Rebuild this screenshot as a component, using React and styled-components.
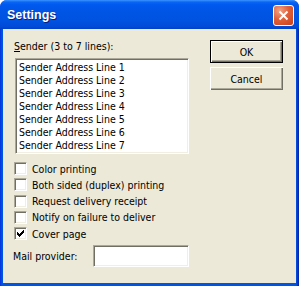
import React from "react";
import styled, { createGlobalStyle } from "styled-components";

const GlobalStyle = createGlobalStyle`
  html, body {
    margin: 0;
    padding: 0;
    background: #ffffff;
  }
  body {
    font-family: "DejaVu Sans Condensed", "DejaVu Sans", sans-serif;
    font-size: 10.5px;
    color: #000;
  }
`;

const Window = styled.div`
  width: 299px;
  height: 286px;
  display: flex;
  flex-direction: column;
  box-sizing: border-box;
  background: linear-gradient(to right, #0831d9 0, #0054e3 2px, #0054e3 296px, #001ea0 299px);
  border-radius: 7px 7px 0 0;
  overflow: hidden;
`;

const TitleBar = styled.div`
  height: 29px;
  flex: none;
  display: flex;
  align-items: center;
  justify-content: space-between;
  padding: 0 5px 0 7px;
  box-sizing: border-box;
  background: linear-gradient(
    to bottom,
    #3d95ff 0,
    #0a66f5 2px,
    #0058ee 5px,
    #0055e5 12px,
    #0053e1 20px,
    #004cd9 26px,
    #0041c8 29px
  );
`;

const Title = styled.span`
  font-family: "Liberation Sans", Arial, sans-serif;
  font-weight: bold;
  font-size: 12.5px;
  color: #fff;
  text-shadow: 1px 1px 0 #0a1e80;
  padding-top: 1px;
`;

const CloseButton = styled.div`
  width: 21px;
  height: 21px;
  box-sizing: border-box;
  border: 1px solid #fff;
  border-radius: 3px;
  background: radial-gradient(circle at 30% 25%, #f0a486 0, #e0603a 45%, #c8401a 100%);
  display: flex;
  align-items: center;
  justify-content: center;
  margin-top: 2px;
`;

const Client = styled.div`
  flex: 1;
  margin: 0 3px 3px 3px;
  background: #ece9d8;
  display: flex;
  gap: 21px;
  padding: 11px 13px 0 11px;
  box-sizing: border-box;
`;

const LeftColumn = styled.div`
  width: 175px;
  display: flex;
  flex-direction: column;
`;

const RightColumn = styled.div`
  width: 73px;
  display: flex;
  flex-direction: column;
  gap: 4px;
`;

const Label = styled.div`
  line-height: 13px;
  height: 13px;
  margin-bottom: 5px;
  white-space: nowrap;
`;

const sunken = `
  border: 1px solid;
  border-color: #aca899 #ffffff #ffffff #aca899;
  box-shadow: inset 1px 1px 0 #716f64, inset -1px -1px 0 #f1efe2;
  background: #fff;
  box-sizing: border-box;
`;

const ListBox = styled.div`
  ${sunken}
  width: 174px;
  height: 96px;
  margin-left: 1px;
  padding: 2px 3px;
`;

const ListItem = styled.div`
  line-height: 13px;
  height: 13px;
  white-space: nowrap;
`;

const Checks = styled.div`
  margin-top: 8px;
  display: flex;
  flex-direction: column;
  gap: 3.25px;
`;

const CheckRow = styled.div`
  height: 13px;
  display: flex;
  align-items: center;
  gap: 5px;
  white-space: nowrap;
`;

const Box = styled.div`
  ${sunken}
  width: 13px;
  height: 13px;
  flex: none;
  display: flex;
  align-items: center;
  justify-content: center;
`;

const MailRow = styled.div`
  margin-top: 5px;
  height: 22px;
  display: flex;
  align-items: center;
`;

const MailLabel = styled.span`
  width: 81px;
  margin-left: -1px;
  white-space: nowrap;
`;

const TextInput = styled.div`
  ${sunken}
  width: 98px;
  height: 22px;
`;

const Button = styled.div`
  width: 73px;
  height: 23px;
  box-sizing: border-box;
  display: flex;
  align-items: center;
  justify-content: center;
  background: #ece9d8;
  border: ${p => (p.$default ? "1px solid #000" : "none")};
  box-shadow: inset 1px 1px 0 #fff, inset -1px -1px 0 #716f64, inset -2px -2px 0 #aca899;
`;

const checkRows = [
  [6, 1], [5, 2], [0, 1, 4, 3], [0, 2, 3, 3], [0, 5], [1, 3], [2, 1],
];

const Check = () => (
  <svg width="7" height="7" viewBox="0 0 7 7" shapeRendering="crispEdges">
    {checkRows.map((r, y) => {
      const rects = [];
      for (let i = 0; i < r.length; i += 2) {
        rects.push(<rect key={i} x={r[i]} y={y} width={r[i + 1]} height="1" fill="#000" />);
      }
      return rects;
    })}
  </svg>
);

const lines = [1, 2, 3, 4, 5, 6, 7];
const options = [
  { text: "Color printing", checked: false },
  { text: "Both sided (duplex) printing", checked: false },
  { text: "Request delivery receipt", checked: false },
  { text: "Notify on failure to deliver", checked: false },
  { text: "Cover page", checked: true },
];

export default function App() {
  return (
    <>
      <GlobalStyle />
      <Window>
        <TitleBar>
          <Title>Settings</Title>
          <CloseButton>
            <svg width="11" height="11" viewBox="0 0 11 11">
              <path d="M1.5 1.5l8 8M9.5 1.5l-8 8" stroke="#fff" strokeWidth="2" />
            </svg>
          </CloseButton>
        </TitleBar>
        <Client>
          <LeftColumn>
            <Label>
              <u>S</u>ender (3 to 7 lines):
            </Label>
            <ListBox>
              {lines.map(n => (
                <ListItem key={n}>Sender Address Line {n}</ListItem>
              ))}
            </ListBox>
            <Checks>
              {options.map(o => (
                <CheckRow key={o.text}>
                  <Box>{o.checked && <Check />}</Box>
                  <span>{o.text}</span>
                </CheckRow>
              ))}
            </Checks>
            <MailRow>
              <MailLabel>Mail provider:</MailLabel>
              <TextInput />
            </MailRow>
          </LeftColumn>
          <RightColumn>
            <Button $default>OK</Button>
            <Button>Cancel</Button>
          </RightColumn>
        </Client>
      </Window>
    </>
  );
}
